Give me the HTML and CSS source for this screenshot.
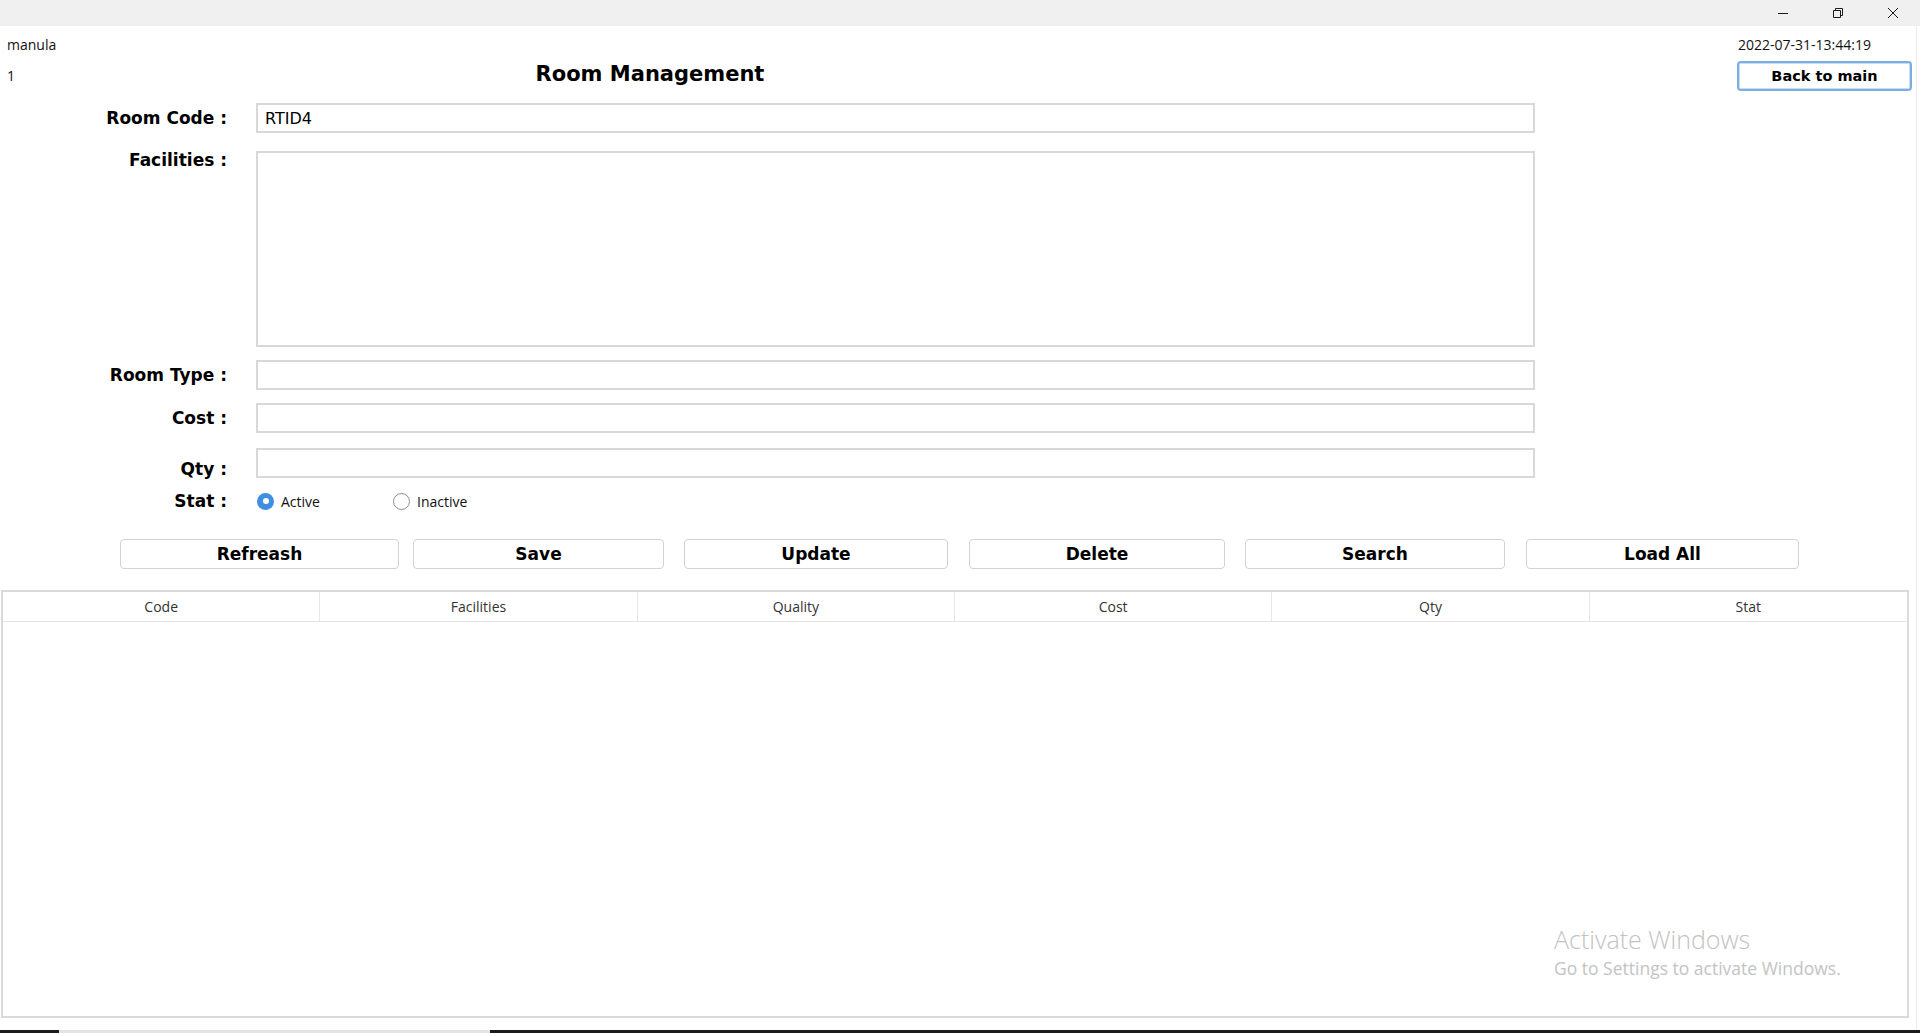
FILE: index.html
```html
<!DOCTYPE html>
<html lang="en">
<head>
<meta charset="utf-8">
<title>Room Management</title>
<link rel="stylesheet" href="styles.css">
</head>
<body>
<div class="window">
  <div class="titlebar">
    <div class="ctl">
      <svg width="12" height="12" viewBox="0 0 12 12"><path d="M1 6.5h10" stroke="#1a1a1a" stroke-width="1" fill="none"/></svg>
    </div>
    <div class="ctl">
      <svg width="12" height="12" viewBox="0 0 12 12"><path d="M1.5 3.5h7v7h-7z" stroke="#1a1a1a" stroke-width="1" fill="none"/><path d="M3.5 3.5v-2h7v7h-2" stroke="#1a1a1a" stroke-width="1" fill="none"/></svg>
    </div>
    <div class="ctl">
      <svg width="12" height="12" viewBox="0 0 12 12"><path d="M1 1l10 10M11 1L1 11" stroke="#1a1a1a" stroke-width="1" fill="none"/></svg>
    </div>
  </div>

  <div class="content">
    <header class="header">
      <div class="user">
        <div class="user-name">manula</div>
        <div class="user-id">1</div>
      </div>
      <h1 class="title">Room Management</h1>
      <div class="right-col">
        <div class="date">2022-07-31-13:44:19</div>
        <button class="back" type="button">Back to main</button>
      </div>
    </header>

    <form class="form">
      <div class="row row-code">
        <label class="lbl">Room Code :</label>
        <div class="field">RTID4</div>
      </div>
      <div class="row row-fac">
        <label class="lbl lbl-top">Facilities :</label>
        <div class="field area"></div>
      </div>
      <div class="row row-type">
        <label class="lbl">Room Type :</label>
        <div class="field"></div>
      </div>
      <div class="row row-cost">
        <label class="lbl">Cost :</label>
        <div class="field"></div>
      </div>
      <div class="row row-qty">
        <label class="lbl lbl-bottom">Qty :</label>
        <div class="field"></div>
      </div>
      <div class="row row-stat">
        <label class="lbl">Stat :</label>
        <div class="radios">
          <div class="opt opt-active"><span class="radio on"></span><span class="opt-text">Active</span></div>
          <div class="opt"><span class="radio"></span><span class="opt-text">Inactive</span></div>
        </div>
      </div>
    </form>

    <div class="actions">
      <button class="btn b-refresh" type="button">Refreash</button>
      <button class="btn b-save" type="button">Save</button>
      <button class="btn b-update" type="button">Update</button>
      <button class="btn b-delete" type="button">Delete</button>
      <button class="btn b-search" type="button">Search</button>
      <button class="btn b-load" type="button">Load All</button>
    </div>

    <div class="table">
      <div class="thead">
        <div class="th">Code</div>
        <div class="th">Facilities</div>
        <div class="th">Quality</div>
        <div class="th">Cost</div>
        <div class="th">Qty</div>
        <div class="th">Stat</div>
      </div>
      <div class="tbody"></div>
      <div class="watermark">
        <div class="wm1">Activate Windows</div>
        <div class="wm2">Go to Settings to activate Windows.</div>
      </div>
    </div>
  </div>

  <div class="taskbar">
    <div class="tb-dark tb-start"></div>
    <div class="tb-light"></div>
    <div class="tb-dark tb-rest"></div>
  </div>
</div>
</body>
</html>
```

FILE: styles.css
```css
* { box-sizing: border-box; }

html, body {
  margin: 0;
  padding: 0;
  background: #ffffff;
}

body {
  width: 1920px;
  height: 1033px;
  overflow: hidden;
  font-family: "Open Sans", "Noto Sans", sans-serif;
  color: #000;
}

.window {
  width: 1920px;
  height: 1033px;
  display: flex;
  flex-direction: column;
}

/* title bar */
.titlebar {
  height: 26px;
  background: #f0f0f0;
  display: flex;
  justify-content: flex-end;
  flex-shrink: 0;
}
.ctl {
  width: 55px;
  height: 26px;
  display: flex;
  align-items: center;
  justify-content: center;
}

.content {
  flex: 1;
  width: 1917px;
  border-right: 1px solid #ececec;
  position: relative;
}

/* header */
.header {
  height: 77px;
  display: grid;
  grid-template-columns: 1300px 1fr 175px;
  padding-right: 4px;
}
.user {
  grid-column: 1;
  grid-row: 1;
  padding-left: 7px;
  padding-top: 9px;
  font-size: 14px;
  line-height: 19px;
  color: #111;
}
.user-id {
  margin-top: 12px;
}
.title {
  grid-column: 1;
  grid-row: 1;
  justify-self: center;
  align-self: start;
  margin: 35px 0 0 0;
  font-family: "DejaVu Sans", Verdana, sans-serif;
  font-weight: bold;
  font-size: 21px;
  line-height: 26px;
  color: #000;
}
.right-col {
  grid-column: 3;
  grid-row: 1;
  padding-top: 9px;
  display: flex;
  flex-direction: column;
}
.date {
  font-size: 14px;
  line-height: 19px;
  color: #111;
  padding-left: 1px;
}
.back {
  margin-top: 7px;
  width: 175px;
  height: 30px;
  background: #fff;
  border: 2px solid #7aaee3;
  border-radius: 4px;
  box-shadow: inset 0 0 0 1px #c9ddf3;
  font-family: "DejaVu Sans", Verdana, sans-serif;
  font-weight: bold;
  font-size: 14.5px;
  color: #000;
  padding: 0;
}

/* form */
.form {
  margin: 0;
}
.row {
  display: flex;
  align-items: center;
}
.lbl {
  width: 227px;
  margin-right: 29px;
  text-align: right;
  font-family: "DejaVu Sans", Verdana, sans-serif;
  font-weight: bold;
  font-size: 17px;
  line-height: 20px;
  color: #000;
  flex-shrink: 0;
}
.lbl-top { align-self: flex-start; margin-top: -1px; }
.lbl-bottom { align-self: flex-end; margin-bottom: -1px; }

.field {
  width: 1279px;
  height: 30px;
  border: 2px solid #d8d8d8;
  background: #fff;
  padding: 0 0 0 7px;
  display: flex;
  align-items: center;
  font-family: "DejaVu Sans", Verdana, sans-serif;
  font-size: 16px;
  color: #000;
}
.field.area {
  height: 196px;
}

.row-fac { margin-top: 18px; }
.row-type { margin-top: 13px; }
.row-cost { margin-top: 13px; }
.row-qty { margin-top: 15px; }
.row-stat { margin-top: 13px; height: 20px; }

.radios {
  display: flex;
  align-items: center;
  height: 20px;
}
.opt {
  display: flex;
  align-items: center;
  gap: 7px;
}
.opt-active {
  width: 137px;
  padding-left: 1px;
}
.radio {
  width: 17px;
  height: 17px;
  border-radius: 50%;
  border: 1px solid #8c8c8c;
  background: #fff;
  flex-shrink: 0;
  display: flex;
  align-items: center;
  justify-content: center;
}
.radio.on {
  border: none;
  background: #3f8ee2;
}
.radio.on::after {
  content: "";
  width: 6px;
  height: 6px;
  border-radius: 50%;
  background: #fff;
}
.opt-text {
  font-size: 14px;
  line-height: 19px;
  color: #111;
}

/* actions */
.actions {
  margin-top: 28px;
  padding-left: 120px;
  display: flex;
  height: 30px;
}
.btn {
  height: 30px;
  background: #fff;
  border: 1.5px solid #d2d2d2;
  border-radius: 4px;
  font-family: "DejaVu Sans", Verdana, sans-serif;
  font-weight: bold;
  font-size: 17px;
  color: #000;
  padding: 0;
}
.b-refresh { width: 279px; }
.b-save { width: 251px; margin-left: 14px; }
.b-update { width: 264px; margin-left: 20px; }
.b-delete { width: 256px; margin-left: 21px; }
.b-search { width: 260px; margin-left: 20px; }
.b-load { width: 273px; margin-left: 21px; }

/* table */
.table {
  margin-top: 21px;
  margin-left: 1px;
  width: 1908px;
  height: 428px;
  border: 2px solid #dadada;
  position: relative;
  background: #fff;
}
.thead {
  display: grid;
  grid-template-columns: repeat(6, 1fr);
  height: 30px;
  border-bottom: 1px solid #e6e6e6;
}
.th {
  display: flex;
  align-items: center;
  justify-content: center;
  font-size: 14px;
  color: #333;
  border-right: 1px solid #e6e6e6;
  padding-bottom: 1px;
}
.th:last-child { border-right: none; }

.watermark {
  position: absolute;
  left: 1551px;
  top: 331px;
  color: #c3c3c3;
  pointer-events: none;
}
.wm1 {
  font-size: 25px;
  line-height: 33px;
  font-weight: 300;
}
.wm2 {
  margin-top: 1px;
  font-size: 17.5px;
  line-height: 23px;
}

/* taskbar strip */
.taskbar {
  height: 3px;
  display: flex;
  flex-shrink: 0;
}
.tb-dark { background: #1d1b19; }
.tb-start { width: 59px; }
.tb-light { width: 431px; background: #e4e4e4; }
.tb-rest { flex: 1; }
```
